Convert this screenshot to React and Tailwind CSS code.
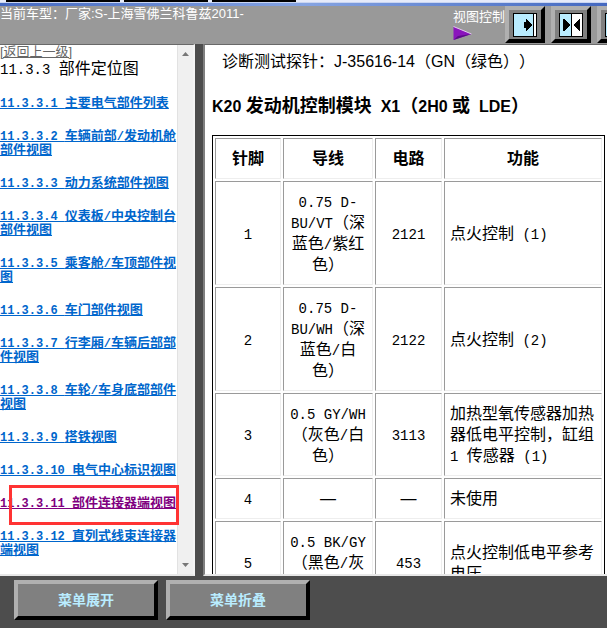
import React from 'react';

const sections = [
  { no: '11.3.3.1', name: '主要电气部件列表' },
  { no: '11.3.3.2', name: '车辆前部/发动机舱部件视图' },
  { no: '11.3.3.3', name: '动力系统部件视图' },
  { no: '11.3.3.4', name: '仪表板/中央控制台部件视图' },
  { no: '11.3.3.5', name: '乘客舱/车顶部件视图' },
  { no: '11.3.3.6', name: '车门部件视图' },
  { no: '11.3.3.7', name: '行李厢/车辆后部部件视图' },
  { no: '11.3.3.8', name: '车轮/车身底部部件视图' },
  { no: '11.3.3.9', name: '搭铁视图' },
  { no: '11.3.3.10', name: '电气中心标识视图' },
  { no: '11.3.3.11', name: '部件连接器端视图', visited: true },
  { no: '11.3.3.12', name: '直列式线束连接器端视图' },
];

const pins = [
  { pin: '1', wire: '0.75 D-BU/VT（深蓝色/紫红色）', circuit: '2121', fn: '点火控制 (1)' },
  { pin: '2', wire: '0.75 D-BU/WH（深蓝色/白色）', circuit: '2122', fn: '点火控制 (2)' },
  { pin: '3', wire: '0.5 GY/WH（灰色/白色）', circuit: '3113', fn: '加热型氧传感器加热器低电平控制，缸组 1 传感器 (1)' },
  { pin: '4', wire: '—', circuit: '—', fn: '未使用' },
  { pin: '5', wire: '0.5 BK/GY（黑色/灰色）', circuit: '453', fn: '点火控制低电平参考电压' },
];

// Latin runs are set smaller so two of them take about one Chinese character
const Mixed = ({ text, latin }) =>
  text.split(/([\x20-\x7e\xa0]+)/).map((part, i) =>
    i % 2 ? <span key={i} className={latin}>{part}</span> : part
  );

const bevel = 'border-4 border-t-[#b0b0b0] border-l-[#b0b0b0] border-r-black border-b-black bg-[#808080]';
const cell = 'border border-t-[#9a9a9a] border-l-[#9a9a9a] border-r-[#eeeeee] border-b-[#eeeeee] px-[5px] py-[9px]';
const mono = "font-['Liberation_Mono',monospace] text-[14px] leading-none";

const ViewButton = ({ label, children }) => (
  <button type="button" aria-label={label} className={`h-[37px] w-10 shrink-0 flex items-center justify-center ${bevel}`}>
    <svg className="shrink-0" width="24" height="24" viewBox="0 0 24 24" shapeRendering="crispEdges">
      {children}
    </svg>
  </button>
);

const Header = () => (
  <header className="shrink-0 bg-[#999999] text-white text-[13px] leading-4">
    <div className="flex h-[2px] bg-[#e6ebfa]">
      <div className="flex w-1/2 gap-1 pl-[6px]">
        <div className="w-[114px] bg-black" />
        <div className="w-[84px] bg-black" />
        <div className="w-[84px] bg-black" />
      </div>
    </div>
    <div className="h-px bg-[#c9d5f2]" />
    <div className="h-[3px] bg-linear-to-r from-[#4468c0] via-[#86a4e2] to-[#4468c0]" />
    <div className="flex h-[38px] items-start overflow-hidden">
      <p className="flex-1 whitespace-nowrap">当前车型：厂家:S-上海雪佛兰科鲁兹2011-</p>
      <div className="w-[52px] shrink-0 pt-[3px]">
        <p className="whitespace-nowrap">视图控制</p>
        <svg width="20" height="16" viewBox="0 0 20 16">
          <path d="M0.5 1.5 L18.5 9 L0.5 15 Z" fill="#8a14bc" />
          <path d="M0.5 1.5 L18.5 9" stroke="#e6c8f2" strokeWidth="1" fill="none" />
          <path d="M0.5 15 L18.5 9 L5 11 Z" fill="#5c0c88" />
        </svg>
      </div>
      <div className="flex w-[102px] shrink-0 gap-[6px] overflow-hidden">
        <ViewButton label="展开右侧">
          <rect x="0" y="0" width="24" height="24" fill="#000" />
          <rect x="1" y="1" width="19" height="22" fill="#b9ecff" />
          <rect x="21" y="1" width="2" height="22" fill="#fff" />
          <path d="M11 9h2V6h1l5 6-5 6h-1v-3h-2z" fill="#000" />
        </ViewButton>
        <ViewButton label="平分视图">
          <rect x="0" y="0" width="24" height="24" fill="#000" />
          <rect x="1" y="1" width="11" height="22" fill="#b9ecff" />
          <rect x="13" y="1" width="10" height="22" fill="#fff" />
          <path d="M4 6h1l6 6-6 6H4zM21 6h-1l-6 6 6 6h1z" fill="#000" />
        </ViewButton>
        <ViewButton label="展开左侧">
          <rect x="0" y="0" width="24" height="24" fill="#000" />
          <rect x="1" y="1" width="2" height="22" fill="#b9ecff" />
          <rect x="4" y="1" width="19" height="22" fill="#fff" />
          <path d="M13 9h-2V6h-1l-5 6 5 6h1v-3h2z" fill="#000" />
        </ViewButton>
      </div>
    </div>
  </header>
);

const Sidebar = () => (
  <aside className="flex w-[195px] shrink-0 border-t border-t-[#696969] border-r-2 border-r-[#f4f4f4] border-b-2 border-b-[#e8e8e8] bg-white">
    <nav className="min-w-0 flex-1">
      <a href="#up" className="block text-[13px] leading-[14px] text-[#666666] underline">[返回上一级]</a>
      <h1 className="text-base leading-5">
        <Mixed text="11.3.3 部件定位图" latin={mono} />
      </h1>
      <ul className="mt-[17px] flex flex-col gap-[19px] font-bold text-[13px] leading-[14px]">
        {sections.map((s) => (
          <li key={s.no} className="relative">
            <a href={`#${s.no}`} className={`block break-all underline ${s.visited ? 'text-[#800080]' : 'text-[#0066cc]'}`}>
              <Mixed text={`${s.no} ${s.name}`} latin="font-['Liberation_Mono',monospace] text-[12px] leading-none" />
            </a>
            {s.visited && (
              <span className="pointer-events-none absolute -top-[11px] left-[9px] h-10 w-[170px] border-3 border-[#ff3333]" />
            )}
          </li>
        ))}
      </ul>
    </nav>
    <div className="flex w-4 shrink-0 flex-col items-center justify-between border-l border-[#e2e2e2] bg-[#f0f0f0] py-[7px]">
      <svg width="7" height="4"><path d="M3.5 0 L7 4 H0 Z" fill="#777" /></svg>
      <svg width="7" height="4"><path d="M0 0 H7 L3.5 4 Z" fill="#777" /></svg>
    </div>
  </aside>
);

const Content = () => (
  <main className="min-w-0 flex-1 overflow-hidden border-t border-t-[#696969] border-l-2 border-l-[#808080] border-b-2 border-b-[#e8e8e8] bg-white pl-[7px] pr-[2px] text-black">
    <p className="mt-[7px] pl-[10px] text-base leading-5">诊断测试探针：J-35616-14（GN（绿色））</p>
    <h2 className="mt-6 text-lg font-bold leading-5">
      <Mixed text={'K20 发动机控制模块\u00a0 X1（2H0 或\u00a0 LDE）'} latin="text-base leading-none" />
    </h2>
    <table className="mt-[19px] w-full table-fixed border-separate border-spacing-[2px] border border-black text-base leading-[21px]">
      <thead>
        <tr>
          <th className={`w-[66px] ${cell}`}>针脚</th>
          <th className={`w-[90px] ${cell}`}>导线</th>
          <th className={`w-[67px] ${cell}`}>电路</th>
          <th className={cell}>功能</th>
        </tr>
      </thead>
      <tbody>
        {pins.map((p) => (
          <tr key={p.pin}>
            <td className={`text-center ${cell}`}><Mixed text={p.pin} latin={mono} /></td>
            <td className={`text-center ${cell}`}><Mixed text={p.wire} latin={mono} /></td>
            <td className={`text-center ${cell}`}><Mixed text={p.circuit} latin={mono} /></td>
            <td className={cell}><Mixed text={p.fn} latin={mono} /></td>
          </tr>
        ))}
      </tbody>
    </table>
  </main>
);

const Footer = () => (
  <footer className="flex shrink-0 gap-2 border-b-2 border-white bg-[#4d4d4d] px-[14px] pt-1 pb-2 font-bold text-[14px] text-[#b9ecff]">
    <button type="button" className={`h-10 w-36 ${bevel}`}>菜单展开</button>
    <button type="button" className={`h-10 w-36 ${bevel}`}>菜单折叠</button>
  </footer>
);

export default function App() {
  return (
    <div lang="zh-CN" className="flex h-screen flex-col overflow-hidden bg-[#4d4d4d] font-['Liberation_Sans','Noto_Sans_CJK_SC',sans-serif] [text-spacing-trim:space-all]">
      <Header />
      <div className="flex min-h-0 flex-1 gap-2">
        <Sidebar />
        <Content />
      </div>
      <Footer />
    </div>
  );
}
